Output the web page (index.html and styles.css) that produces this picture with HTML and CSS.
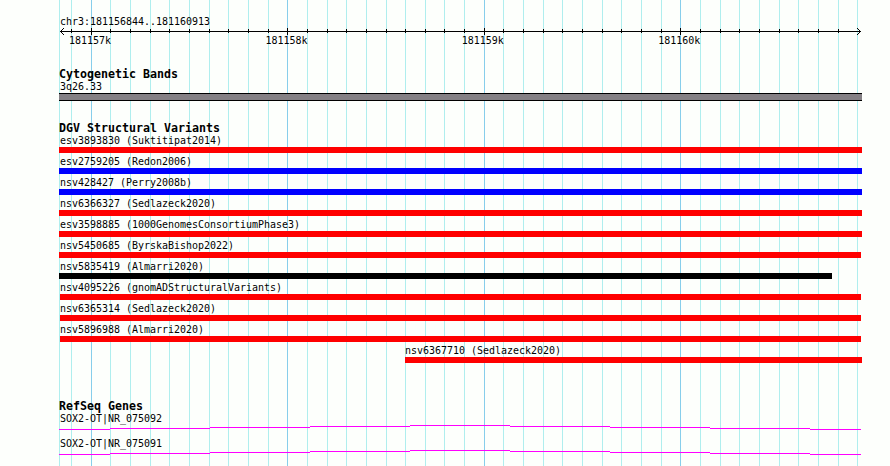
FILE: index.html
```html
<!DOCTYPE html>
<html lang="en">
<head>
    <meta charset="UTF-8">
    <meta name="viewport" content="width=device-width, initial-scale=1.0">
    <title>chr3:181156844..181160913</title>
    <link rel="stylesheet" href="styles.css">
</head>
<body>
    <div class="browser">
        <!-- Grid lines behind the tracks -->
        <svg class="grid" width="890" height="466" shape-rendering="crispEdges">
            <path class="minor" d="M59.5 0V466M71.5 0V466M110.5 0V466M130.5 0V466M150.5 0V466M169.5 0V466M189.5 0V466M209.5 0V466M228.5 0V466M248.5 0V466M268.5 0V466M307.5 0V466M327.5 0V466M346.5 0V466M366.5 0V466M386.5 0V466M405.5 0V466M425.5 0V466M444.5 0V466M464.5 0V466M503.5 0V466M523.5 0V466M543.5 0V466M562.5 0V466M582.5 0V466M602.5 0V466M621.5 0V466M641.5 0V466M661.5 0V466M700.5 0V466M720.5 0V466M739.5 0V466M759.5 0V466M779.5 0V466M798.5 0V466M818.5 0V466M838.5 0V466M857.5 0V466"/>
            <path class="major" d="M91.5 0V466M287.5 0V466M484.5 0V466M680.5 0V466"/>
        </svg>

        <!-- Scale -->
        <div class="scale">
            <div class="label">chr3:181156844..181160913</div>
            <svg class="ruler" width="803" height="7" viewBox="59 28 803 7" shape-rendering="crispEdges">
                <path d="M60 31.5H861"/>
                <path d="M71.5 29V33M110.5 29V33M130.5 29V33M150.5 29V33M169.5 29V33M189.5 29V33M209.5 29V33M228.5 29V33M248.5 29V33M268.5 29V33M307.5 29V33M327.5 29V33M346.5 29V33M366.5 29V33M386.5 29V33M405.5 29V33M425.5 29V33M444.5 29V33M464.5 29V33M503.5 29V33M523.5 29V33M543.5 29V33M562.5 29V33M582.5 29V33M602.5 29V33M621.5 29V33M641.5 29V33M661.5 29V33M700.5 29V33M720.5 29V33M739.5 29V33M759.5 29V33M779.5 29V33M798.5 29V33M818.5 29V33M838.5 29V33"/>
                <path d="M91.5 28V35M287.5 28V35M484.5 28V35M680.5 28V35"/>
                <path d="M63 28.5h1M62 29.5h1M61 30.5h1M61 32.5h1M62 33.5h1M63 34.5h1"/>
                <path d="M857 28.5h1M858 29.5h1M859 30.5h1M859 32.5h1M858 33.5h1M857 34.5h1"/>
            </svg>
            <div class="ticks">
                <span>181157k</span>
                <span>181158k</span>
                <span>181159k</span>
                <span>181160k</span>
            </div>
        </div>

        <!-- Cytogenetic Bands -->
        <div class="track cyto">
            <h3>Cytogenetic Bands</h3>
            <div class="label">3q26.33</div>
            <div class="band"></div>
        </div>

        <!-- Structural Variants -->
        <div class="track variants">
            <h3>DGV Structural Variants</h3>
            <div class="variant"><div class="label">esv3893830 (Suktitipat2014)</div><div class="bar"></div></div>
            <div class="variant"><div class="label">esv2759205 (Redon2006)</div><div class="bar blue"></div></div>
            <div class="variant"><div class="label">nsv428427 (Perry2008b)</div><div class="bar blue"></div></div>
            <div class="variant"><div class="label">nsv6366327 (Sedlazeck2020)</div><div class="bar"></div></div>
            <div class="variant"><div class="label">esv3598885 (1000GenomesConsortiumPhase3)</div><div class="bar"></div></div>
            <div class="variant"><div class="label">nsv5450685 (ByrskaBishop2022)</div><div class="bar short"></div></div>
            <div class="variant"><div class="label">nsv5835419 (Almarri2020)</div><div class="bar black"></div></div>
            <div class="variant"><div class="label">nsv4095226 (gnomADStructuralVariants)</div><div class="bar inner"></div></div>
            <div class="variant"><div class="label">nsv6365314 (Sedlazeck2020)</div><div class="bar inner"></div></div>
            <div class="variant"><div class="label">nsv5896988 (Almarri2020)</div><div class="bar inner"></div></div>
            <div class="variant late"><div class="label">nsv6367710 (Sedlazeck2020)</div><div class="bar"></div></div>
        </div>

        <!-- RefSeq Genes -->
        <div class="track genes">
            <h3>RefSeq Genes</h3>
            <div class="gene">
                <div class="label">SOX2-OT|NR_075092</div>
                <svg class="intron" width="803" height="5" shape-rendering="crispEdges">
                    <path d="M0 4.5H51M51 3.5H151M151 2.5H251M251 1.5H351M351 .5H451M451 1.5H551M551 2.5H651M651 3.5H751M751 4.5H802"/>
                </svg>
            </div>
            <div class="gene">
                <div class="label">SOX2-OT|NR_075091</div>
                <svg class="intron" width="803" height="5" shape-rendering="crispEdges">
                    <path d="M0 4.5H51M51 3.5H151M151 2.5H251M251 1.5H351M351 .5H451M451 1.5H551M551 2.5H651M651 3.5H751M751 4.5H802"/>
                </svg>
            </div>
        </div>
    </div>
</body>
</html>
```
FILE: styles.css
```css
/* General Styles */
body {
    margin: 0;
    background-color: #fdfffc;
    color: #000;
    font-family: "DejaVu Sans Mono", monospace;
    font-size: 9.97px;
}

.browser {
    position: relative;
    box-sizing: border-box;
    width: 890px;
    height: 466px;
    padding: 13px 28px 0 59px;
    overflow: hidden;
}

/* Grid Lines */
.grid {
    position: absolute;
    top: 0;
    left: 0;
    z-index: -1;
}

.grid .minor {
    stroke: #afeeee;
}

.grid .major {
    stroke: #87ceeb;
}

svg {
    display: block;
    fill: none;
}

/* Text */
.label {
    height: 13px;
    padding: 2px 0 0 1px;
    line-height: 13px;
    white-space: nowrap;
}

h3 {
    height: 13px;
    margin: 0;
    font-size: 11.63px;
    line-height: 15px;
    font-weight: bold;
    white-space: nowrap;
}

/* Scale */
.scale {
    height: 54px;
}

.ruler {
    stroke: #000;
}

.ticks {
    display: grid;
    grid-template-columns: repeat(4, 196.4px);
    padding-left: 10px;
    line-height: 11px;
}

/* Cytogenetic Bands */
.cyto {
    height: 54px;
}

.cyto .label {
    padding-top: 0;
}

.band {
    height: 6px;
    background-color: #848084;
    border-top: 1px solid #000;
    border-bottom: 1px solid #000;
}

/* Structural Variants */
.variants {
    height: 278px;
}

.variants h3 {
    height: 11px;
}

.bar {
    height: 6px;
    background-color: #ff0000;
}

.blue {
    background-color: #0000ff;
}

.short {
    margin-right: 1px;
}

.black {
    margin-right: 30px;
    background-color: #000;
}

.inner {
    margin: 0 1px;
}

.late {
    margin-left: 346px;
}

.late .label {
    padding-left: 0;
}

/* RefSeq Genes */
.genes h3 {
    height: 11px;
}

.gene {
    height: 25px;
}

.intron {
    stroke: #ff00ff;
}
```
